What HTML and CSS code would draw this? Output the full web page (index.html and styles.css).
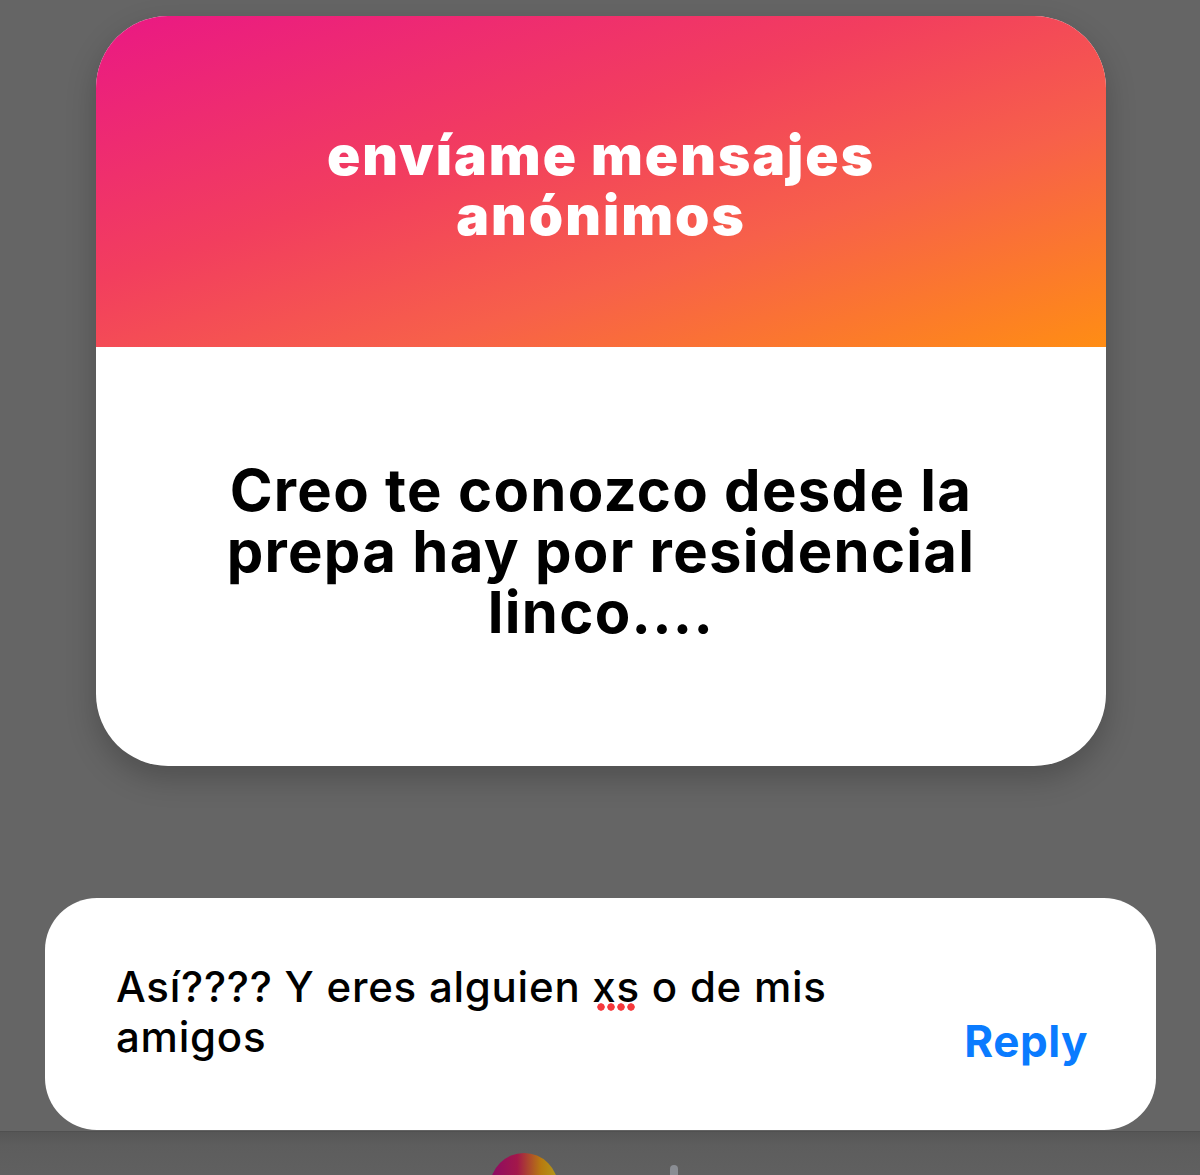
FILE: index.html
```html
<!DOCTYPE html>
<html lang="es">
<head>
<meta charset="utf-8">
<title>envíame mensajes anónimos</title>
<link rel="stylesheet" href="styles.css">
</head>
<body>
<div class="screen">
  <section class="question-card">
    <header class="question-header">
      <h1 class="question-title">envíame mensajes<br>anónimos</h1>
    </header>
    <div class="question-body">
      <p class="question-text">Creo te conozco desde la<br>prepa hay por residencial<br>linco....</p>
    </div>
  </section>

  <section class="reply-card">
    <p class="reply-text">Así???? Y eres alguien <span class="spell">xs</span> o de mis<br>amigos</p>
    <span class="reply-btn">Reply</span>
  </section>

  <footer class="bottom-bar">
    <div class="avatar"></div>
    <div class="handle"></div>
  </footer>
</div>
</body>
</html>
```

FILE: styles.css
```css
* { box-sizing: border-box; }

html, body {
  margin: 0;
  padding: 0;
}

body {
  width: 1200px;
  height: 1175px;
  overflow: hidden;
  background: #656565;
  font-family: "Inter", "Liberation Sans", sans-serif;
}

.screen {
  display: flex;
  flex-direction: column;
  height: 1175px;
  padding-top: 16px;
}

.question-card {
  margin-left: 96px;
  width: 1010px;
  height: 750px;
  border-radius: 72px;
  overflow: hidden;
  background: #ffffff;
  box-shadow: 0 12px 30px rgba(0, 0, 0, 0.22);
  display: flex;
  flex-direction: column;
}

.question-header {
  height: 331px;
  flex: none;
  background: linear-gradient(to bottom right, #ea1884 0%, #f23e5e 40%, #f7604a 66%, #ff8d14 100%);
  padding-top: 109px;
}

.question-title {
  margin: 0;
  color: #ffffff;
  text-align: center;
  font-size: 55px;
  line-height: 60px;
  font-weight: 900;
  letter-spacing: 2px;
}

.question-body {
  flex: 1;
  padding-top: 113px;
}

.question-text {
  margin: 0;
  text-align: center;
  color: #000000;
  font-size: 58px;
  line-height: 61px;
  font-weight: 700;
  letter-spacing: 1.3px;
}

.reply-card {
  margin-top: 132px;
  margin-left: 45px;
  width: 1111px;
  height: 232px;
  flex: none;
  border-radius: 52px;
  background: #ffffff;
  display: flex;
  align-items: flex-end;
  justify-content: space-between;
  padding: 64px 68px 68px 71px;
}

.reply-text {
  margin: 0;
  color: #000000;
  font-size: 42px;
  line-height: 50px;
  font-weight: 500;
  letter-spacing: 0.75px;
}

.spell {
  position: relative;
}

.spell::after {
  content: "";
  position: absolute;
  left: 4px;
  width: 40px;
  bottom: 1px;
  height: 8px;
  background-image: radial-gradient(circle, #f5393c 3.4px, transparent 4px);
  background-size: 10px 8px;
  background-repeat: repeat-x;
}

.reply-btn {
  color: #0a7bff;
  font-size: 44px;
  line-height: 50px;
  font-weight: 700;
  margin-bottom: -4px;
  letter-spacing: 0.5px;
}

.bottom-bar {
  flex: 1;
  margin-top: 1px;
  background: linear-gradient(to bottom, #565656 0%, #5d5d5d 30%, #606060 100%);
  border-top: 1px solid #505050;
  position: relative;
  overflow: hidden;
}

.avatar {
  position: absolute;
  left: 490px;
  top: 21px;
  width: 68px;
  height: 68px;
  border-radius: 50%;
  background: linear-gradient(to right, #8c0a66 0%, #a3174a 40%, #b77a10 75%, #b39a1a 100%);
}

.handle {
  position: absolute;
  left: 670px;
  top: 33px;
  width: 8px;
  height: 30px;
  border-radius: 4px;
  background: #8a8d93;
}
```
